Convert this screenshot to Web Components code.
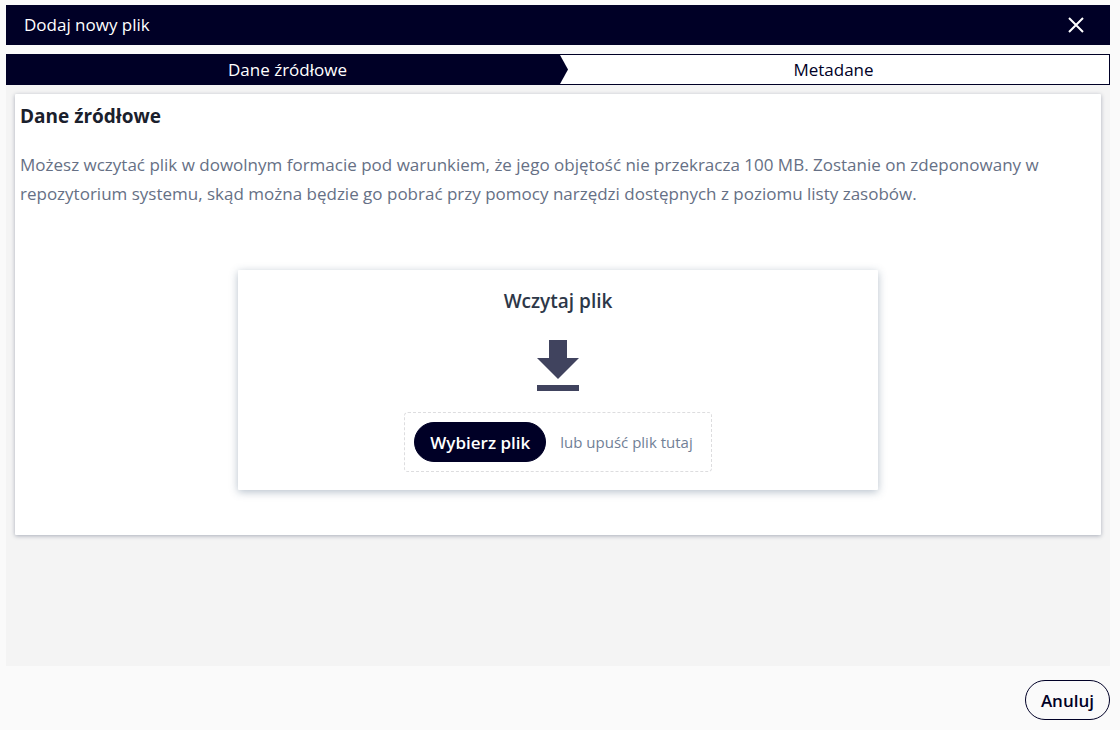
<!DOCTYPE html>
<html lang="pl">
<head>
<meta charset="utf-8">
<meta name="viewport" content="width=device-width, initial-scale=1">
<title>Dodaj nowy plik</title>
<style>
  html { background: #fafafa; }
  body {
    margin: 0;
    font-family: "Open Sans", "Noto Sans", sans-serif;
    font-size: 17px;
    color: #000026;
    --ink: #000026;
  }
</style>
</head>
<body>
<file-dialog>
  <dialog-header slot="header">Dodaj nowy plik</dialog-header>
  <step-bar slot="steps">
    <step-tab active>Dane źródłowe</step-tab>
    <step-tab>Metadane</step-tab>
  </step-bar>
  <content-card>
    <span slot="title">Dane źródłowe</span>
    Możesz wczytać plik w dowolnym formacie pod warunkiem, że jego objętość nie przekracza 100 MB. Zostanie on zdeponowany w repozytorium systemu, skąd można będzie go pobrać przy pomocy narzędzi dostępnych z poziomu listy zasobów.
    <upload-panel slot="body">
      <span slot="title">Wczytaj plik</span>
      <span slot="hint">lub upuść plik tutaj</span>
      Wybierz plik
    </upload-panel>
  </content-card>
  <pill-button slot="actions" outlined>Anuluj</pill-button>
</file-dialog>

<script>
  function define(name, markup, setup) {
    const template = document.createElement('template');
    template.innerHTML = markup;
    customElements.define(name, class extends HTMLElement {
      constructor() {
        super();
        this.attachShadow({ mode: 'open' }).append(template.content.cloneNode(true));
        if (setup) setup(this);
      }
    });
  }

  define('file-dialog', `
    <style>
      :host {
        display: flex;
        flex-direction: column;
        box-sizing: border-box;
        min-height: 100vh;
        padding: 5px 10px 10px 6px;
      }
      ::slotted([slot="steps"]) { margin-top: 9px; }
      main { flex: 1; background: #f4f4f4; padding: 9px; }
      footer { display: flex; justify-content: flex-end; padding-top: 14px; }
    </style>
    <slot name="header"></slot>
    <slot name="steps"></slot>
    <main><slot></slot></main>
    <footer><slot name="actions"></slot></footer>
  `);

  define('dialog-header', `
    <style>
      :host { display: block; background: var(--ink); color: #fff; }
      header {
        display: flex;
        align-items: center;
        justify-content: space-between;
        height: 40px;
        padding: 0 18px;
      }
      h1 { margin: 0; font: inherit; line-height: 24px; }
      button {
        display: grid;
        place-items: center;
        width: 32px;
        height: 32px;
        padding: 0;
        border: 0;
        background: none;
        color: inherit;
        cursor: pointer;
      }
    </style>
    <header>
      <h1><slot></slot></h1>
      <button type="button" aria-label="Zamknij">
        <svg width="16" height="16" viewBox="0 0 16 16" fill="none" stroke="currentColor" stroke-width="2" aria-hidden="true"><path d="M1 1 15 15M15 1 1 15"/></svg>
      </button>
    </header>
  `);

  define('step-bar', `
    <style>
      :host { display: block; }
      nav {
        display: grid;
        grid-template-columns: 1fr 1fr;
        border: 1px solid var(--ink);
        background: #fff;
      }
    </style>
    <nav><slot></slot></nav>
  `);

  define('step-tab', `
    <style>
      :host { display: block; }
      button {
        width: 100%;
        height: 29px;
        padding: 0;
        border: 0;
        background: none;
        font: inherit;
        color: var(--ink);
        cursor: pointer;
      }
      :host([active]) { margin-right: -10px; }
      :host([active]) button {
        background: var(--ink);
        color: #fff;
        clip-path: polygon(0 0, calc(100% - 8px) 0, 100% 50%, calc(100% - 8px) 100%, 0 100%);
      }
    </style>
    <button type="button"><slot></slot></button>
  `);

  define('content-card', `
    <style>
      :host {
        display: block;
        padding: 5px 5px 45px;
        background: #fff;
        border-radius: 1px;
        box-shadow: 0 1px 4px rgba(30, 41, 75, .35);
      }
      h2 { margin: 0; font-size: 19px; line-height: 34px; font-weight: 700; color: #1a202c; }
      p { margin: 17px 0 62px; line-height: 29px; color: #667085; }
    </style>
    <h2><slot name="title"></slot></h2>
    <p><slot></slot></p>
    <slot name="body"></slot>
  `);

  define('upload-panel', `
    <style>
      :host {
        display: flex;
        flex-direction: column;
        align-items: center;
        box-sizing: border-box;
        max-width: 640px;
        margin: 0 auto;
        padding: 16px 16px 18px;
        background: #fff;
        border-radius: 1px;
        box-shadow: 0 2px 8px rgba(45, 75, 105, .35);
      }
      h3 { margin: 0; font-size: 19px; line-height: 30px; font-weight: 600; color: #2d3748; }
      svg { margin: 24px 0 21px; }
      .drop {
        display: flex;
        align-items: center;
        gap: 14px;
        padding: 9px 18px 9px 9px;
        border: 1px dashed #dddddf;
        border-radius: 4px;
      }
      .hint { font-size: 15px; color: #718096; }
    </style>
    <h3><slot name="title"></slot></h3>
    <svg width="42" height="51" viewBox="0 0 42 51" fill="#40435e" aria-hidden="true"><path d="M12 0H30V18H42L21 39 0 18H12ZM0 45H42V51H0Z"/></svg>
    <div class="drop">
      <pill-button><slot></slot></pill-button>
      <span class="hint"><slot name="hint"></slot></span>
      <input type="file" aria-label="Plik" hidden>
    </div>
  `, host => {
    const input = host.shadowRoot.querySelector('input');
    const drop = host.shadowRoot.querySelector('.drop');
    host.shadowRoot.querySelector('pill-button').addEventListener('click', () => input.click());
    drop.addEventListener('dragover', event => event.preventDefault());
    drop.addEventListener('drop', event => {
      event.preventDefault();
      input.files = event.dataTransfer.files;
    });
  });

  define('pill-button', `
    <style>
      :host { display: block; }
      button {
        height: 40px;
        padding: 0 15px;
        border: 1px solid var(--ink);
        border-radius: 20px;
        background: var(--ink);
        color: #fff;
        font: inherit;
        font-weight: 600;
        white-space: nowrap;
        cursor: pointer;
      }
      :host([outlined]) button { background: transparent; color: var(--ink); }
    </style>
    <button type="button"><slot></slot></button>
  `);
</script>
</body>
</html>
